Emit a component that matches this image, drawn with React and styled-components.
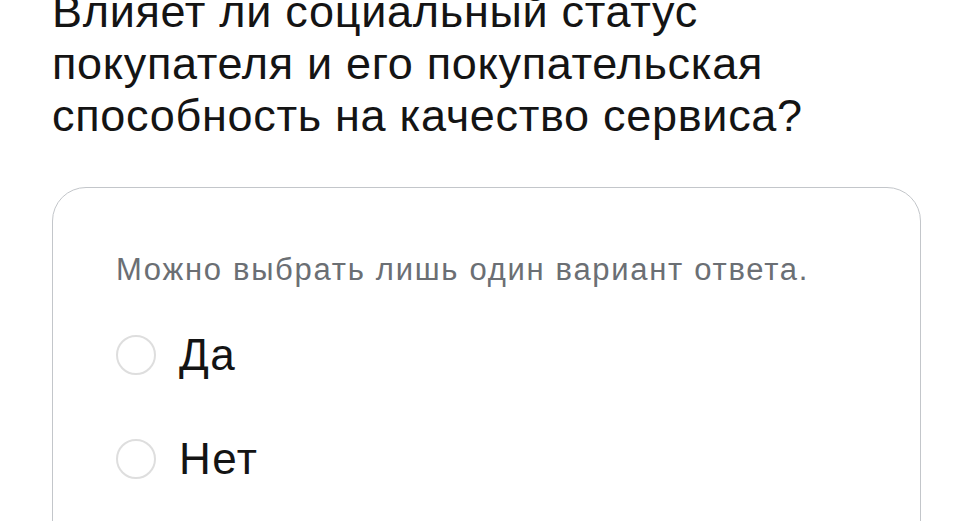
import styled, { createGlobalStyle } from 'styled-components';

const GlobalStyle = createGlobalStyle`
  html, body {
    margin: 0;
    padding: 0;
    background: #ffffff;
    overflow: hidden;
  }
  body {
    font-family: "Liberation Sans", Arial, sans-serif;
    color: #141414;
  }
`;

const Page = styled.main`
  padding: 0 50px 0 52px;
  margin-top: -14px;
`;

const Question = styled.h1`
  margin: 0;
  font-family: "Liberation Sans", Arial, sans-serif;
  font-weight: 400;
  font-size: 45px;
  line-height: 52px;
  letter-spacing: 0.7px;
  color: #141414;
`;

const Card = styled.section`
  margin-top: 45px;
  border: 1.5px solid #c3c6ca;
  border-radius: 34px;
  padding: 64px 63px 40px;
  height: 400px;
`;

const Hint = styled.p`
  margin: 0 0 47px;
  font-size: 31px;
  line-height: 36px;
  letter-spacing: 1.7px;
  color: #6b6f74;
`;

const Options = styled.ul`
  list-style: none;
  margin: 0;
  padding: 0;
  display: flex;
  flex-direction: column;
  gap: 64px;
`;

const Option = styled.li`
  display: flex;
  align-items: center;
  gap: 23px;
  height: 40px;
`;

const Radio = styled.span`
  width: 40px;
  height: 40px;
  border-radius: 50%;
  border: 2px solid #dedede;
  box-sizing: border-box;
  flex: none;
`;

const Label = styled.span`
  font-size: 44px;
  letter-spacing: 1.5px;
  color: #141414;
`;

const answers = ['Да', 'Нет'];

export default function App() {
  return (
    <>
      <GlobalStyle />
      <Page>
        <Question>
          Влияет ли социальный статус
          <br />
          покупателя и его покупательская
          <br />
          способность на качество сервиса?
        </Question>
        <Card>
          <Hint>Можно выбрать лишь один вариант ответа.</Hint>
          <Options>
            {answers.map((a) => (
              <Option key={a}>
                <Radio />
                <Label>{a}</Label>
              </Option>
            ))}
          </Options>
        </Card>
      </Page>
    </>
  );
}
